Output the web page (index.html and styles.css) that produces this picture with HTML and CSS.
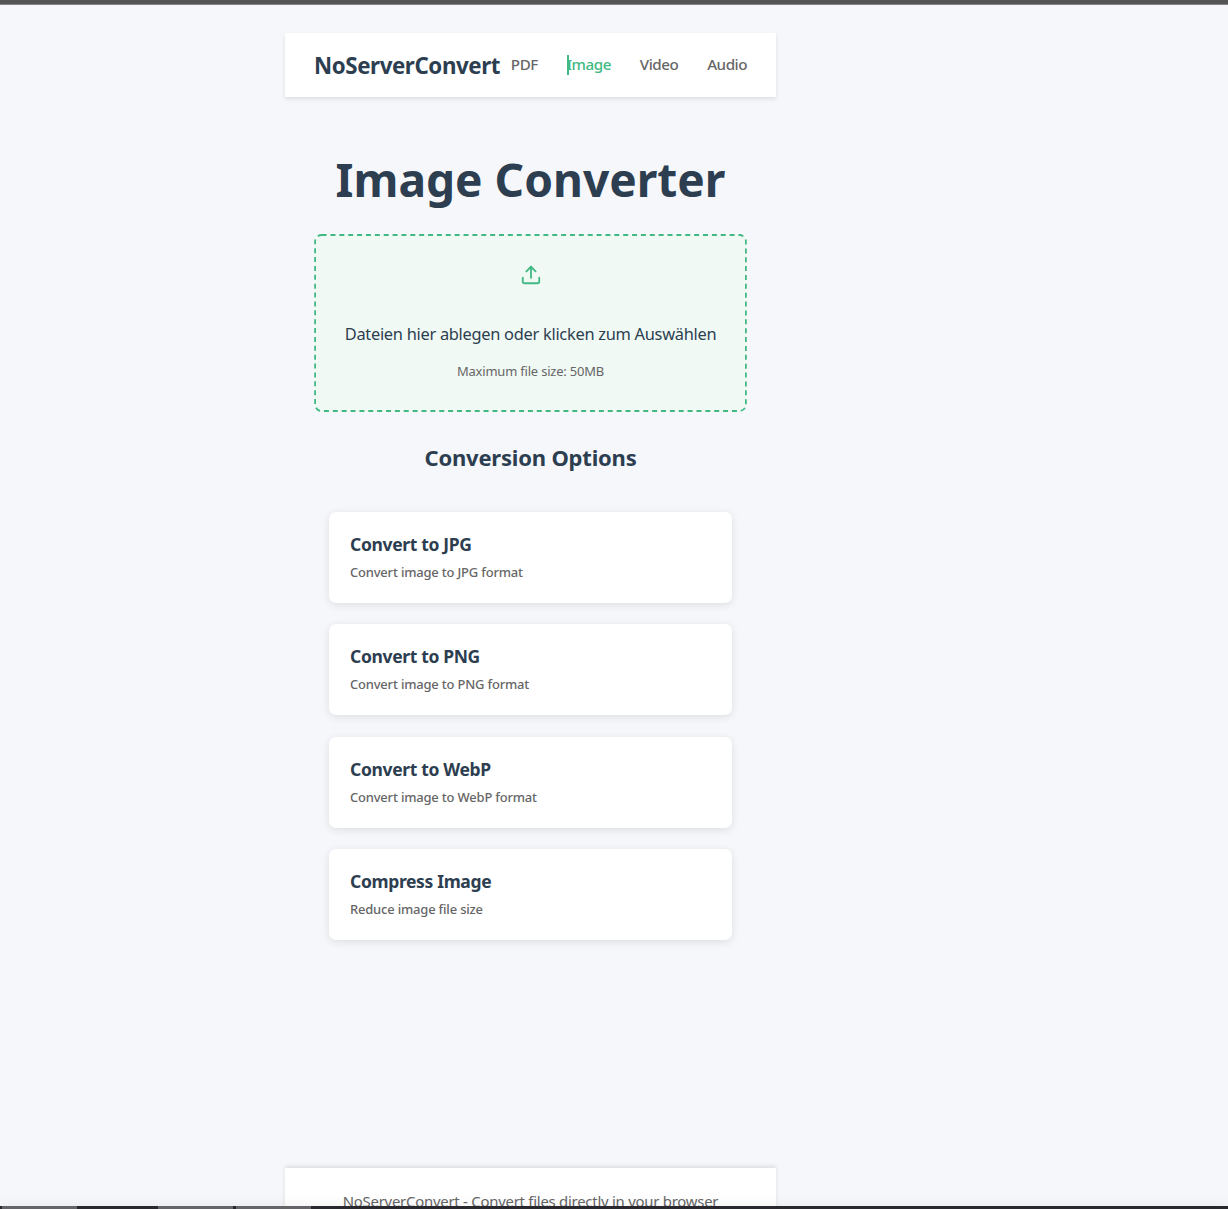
FILE: index.html
```html
<!DOCTYPE html>
<html lang="de">
<head>
<meta charset="utf-8">
<title>NoServerConvert</title>
<link rel="stylesheet" href="styles.css">
</head>
<body>
<div class="topbar"></div>
<div class="viewport">
  <div class="app">
    <header class="header">
      <div class="logo">NoServerConvert</div>
      <nav class="nav">
        <a>PDF</a>
        <a class="active">Image</a>
        <a>Video</a>
        <a>Audio</a>
      </nav>
    </header>
    <main class="main">
      <h1 class="title">Image Converter</h1>
      <section class="dropzone">
        <svg class="outline" viewBox="0 0 433 178" fill="none"><rect x="1.1" y="1" width="430.8" height="176" rx="6.5" stroke="#42b983" stroke-width="1.8" stroke-dasharray="5 3.87"/></svg>
        <svg class="upload" viewBox="0 0 24 24" fill="none" stroke="currentColor" stroke-width="2" stroke-linecap="round" stroke-linejoin="round"><path d="M21 15v4a2 2 0 0 1-2 2H5a2 2 0 0 1-2-2v-4"/><path d="M17 8l-5-5-5 5"/><path d="M12 3v12"/></svg>
        <p class="drop-text">Dateien hier ablegen oder klicken zum Auswählen</p>
        <p class="drop-hint">Maximum file size: 50MB</p>
      </section>
      <h2 class="subtitle">Conversion Options</h2>
      <div class="options">
        <article class="card"><h3>Convert to JPG</h3><p>Convert image to JPG format</p></article>
        <article class="card"><h3>Convert to PNG</h3><p>Convert image to PNG format</p></article>
        <article class="card"><h3>Convert to WebP</h3><p>Convert image to WebP format</p></article>
        <article class="card"><h3>Compress Image</h3><p>Reduce image file size</p></article>
      </div>
    </main>
    <footer class="footer">NoServerConvert - Convert files directly in your browser</footer>
  </div>
</div>
<div class="taskbar"><i class="first"></i><i class="second"></i><i class="third"></i></div>
</body>
</html>
```
FILE: styles.css
```css
* { box-sizing: border-box; margin: 0; padding: 0; }
html { font-size: 14.4px; }
body {
  height: 1209px;
  overflow: hidden;
  display: flex;
  flex-direction: column;
  background: #f5f7fb;
  color: #2c3e50;
  font-family: "Noto Sans", sans-serif;
}
.topbar { flex: none; height: 5px; background: #555; border-bottom: 1px solid #858585; }
.viewport { flex: none; height: 1201px; overflow: hidden; padding: 28px 0 0 285px; }
.app { width: 491px; display: flex; flex-direction: column; }
.header {
  height: 64px;
  padding: 0 29px;
  display: flex;
  align-items: center;
  justify-content: space-between;
  background: #fff;
  box-shadow: 0 2px 4px rgba(0, 0, 0, .1);
}
.logo { padding-top: 2px; font-size: 22.3px; letter-spacing: -.4px; font-weight: 700; line-height: 34px; white-space: nowrap; }
.nav { display: flex; gap: 28.9px; color: #666; font-size: 15.2px; letter-spacing: -.48px; font-weight: 500; line-height: 18px; }
.nav a { padding-bottom: 2px; }
.nav .active { color: #42b983; box-shadow: inset 2px 0 #42b983; }
.main { height: 1071px; padding: 49px 29px 0; display: flex; flex-direction: column; }
.title { height: 69px; line-height: 68px; font-size: 46.08px; font-weight: 700; text-align: center; white-space: nowrap; }
.dropzone {
  position: relative;
  height: 178px;
  margin-top: 19px;
  padding-top: 30px;
  display: flex;
  flex-direction: column;
  align-items: center;
  background: #f0f9f4;
  border-radius: 7px;
}
.outline { position: absolute; inset: 0; width: 433px; height: 178px; }
.upload { width: 22px; height: 22px; color: #42b983; }
.drop-text { margin-top: 34px; font-size: 16.4px; letter-spacing: -.28px; line-height: 27px; white-space: nowrap; }
.drop-hint { margin-top: 13px; color: #666; font-size: 12.96px; letter-spacing: -.19px; line-height: 22px; }
.subtitle { margin-top: 27px; font-size: 22px; letter-spacing: -.2px; line-height: 36px; font-weight: 700; text-align: center; }
.options { margin: 36.7px 14.6px 0 15px; display: grid; gap: 21.6px; }
.card {
  height: 90.9px;
  padding: 20px 21px;
  background: #fff;
  border-radius: 7.2px;
  box-shadow: 0 2px 8px rgba(0, 0, 0, .1);
}
.card h3 { font-size: 17.5px; letter-spacing: -.35px; line-height: 24px; font-weight: 700; }
.card p { margin-top: 6.3px; font-size: 12.96px; letter-spacing: -.18px; line-height: 20px; font-weight: 500; color: #666; }
.footer {
  height: 90px;
  padding-top: 21px;
  background: #fff;
  color: #666;
  font-size: 14.9px;
  letter-spacing: -.24px;
  line-height: 24px;
  text-align: center;
  box-shadow: 0 -2px 4px rgba(0, 0, 0, .1);
}
.taskbar { flex: none; display: flex; height: 3px; padding-left: 2px; background: #29282e; box-shadow: 0 0 12px rgba(0, 0, 0, .15); }
.taskbar i { height: 3px; background: #656569; }
.first { width: 75px; }
.second { width: 75px; margin-left: 81px; }
.third { width: 75px; margin-left: 3px; }
```
